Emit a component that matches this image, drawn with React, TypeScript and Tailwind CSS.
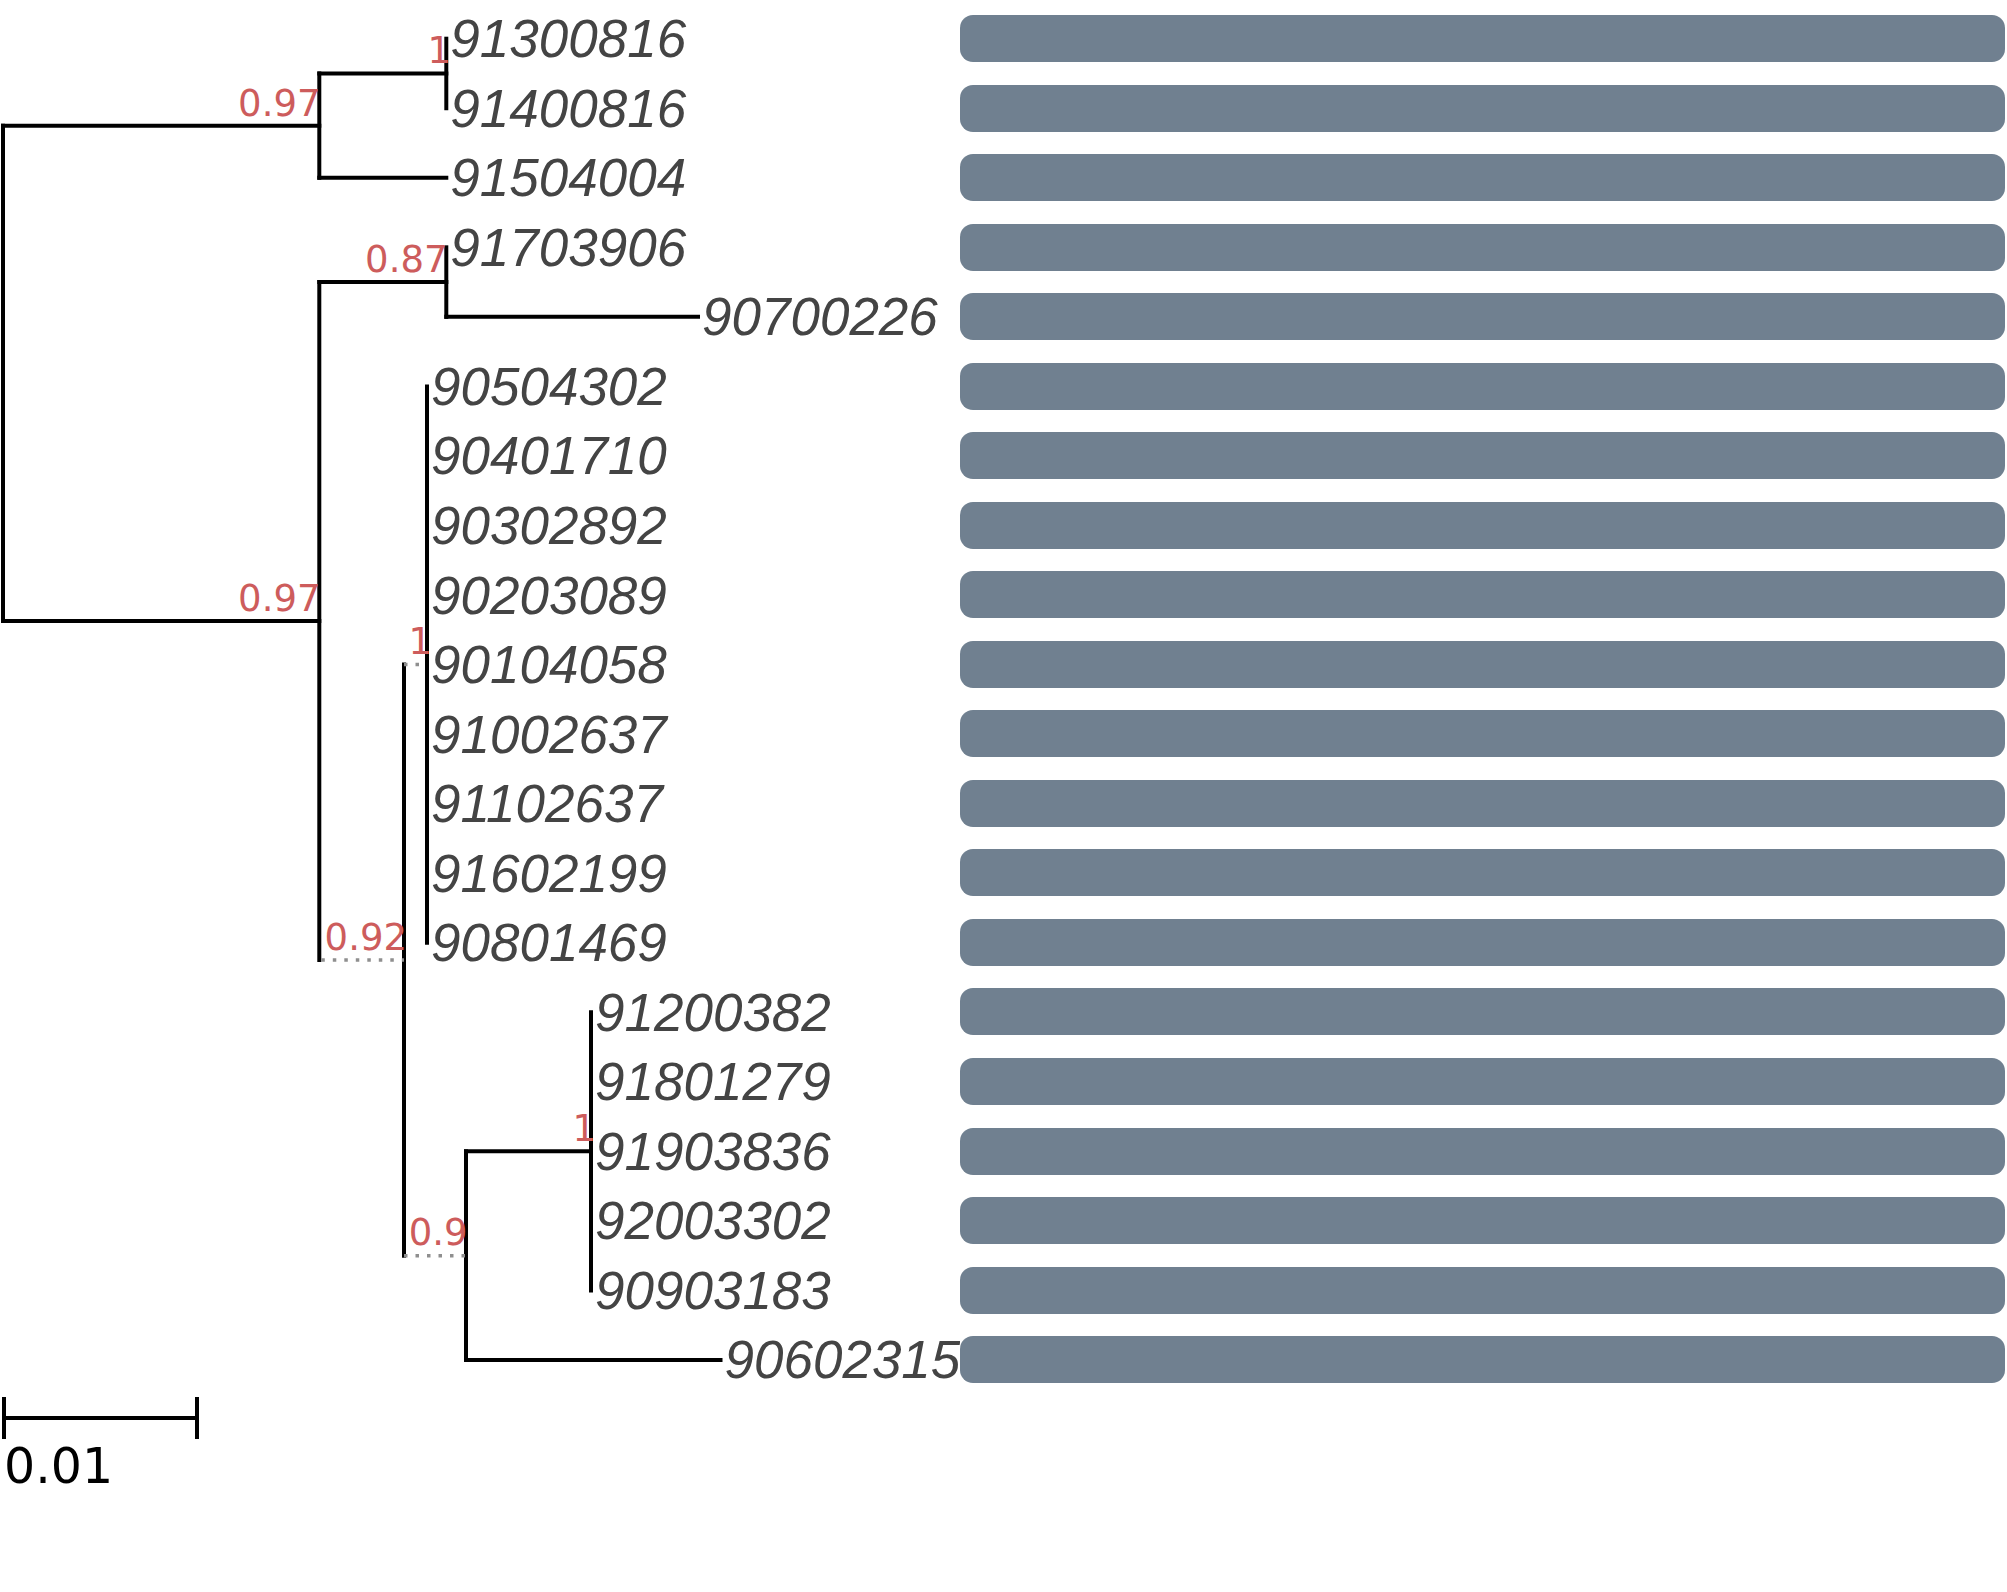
const ROW_TOP = 38.7;
const ROW_STEP = 69.54;
const rowY = (i: number) => ROW_TOP + ROW_STEP * i;

const LABEL_FONT = "'DejaVu Sans', 'Liberation Sans', sans-serif";
const LEAF_FONT = "'Liberation Sans', Arial, sans-serif";

// node positions (x = depth, y = midpoint of children)
const X_ROOT = 3;
const X_TOP = 319.3;
const X_CHERRY = 446.3;
const X_N092 = 404;
const X_P1 = 427;
const X_N09 = 466;
const X_P2 = 591;

const yC1 = (rowY(0) + rowY(1)) / 2;
const yA = (yC1 + rowY(2)) / 2;
const yN087 = (rowY(3) + rowY(4)) / 2;
const yP1 = (rowY(5) + rowY(13)) / 2;
const yP2 = (rowY(14) + rowY(18)) / 2;
const yN09 = (yP2 + rowY(19)) / 2;
const yN092 = (yP1 + yN09) / 2;
const yB = (yN087 + yN092) / 2;

const leaves = [
  { name: "91300816", x: X_CHERRY },
  { name: "91400816", x: X_CHERRY },
  { name: "91504004", x: X_CHERRY },
  { name: "91703906", x: X_CHERRY },
  { name: "90700226", x: 698 },
  { name: "90504302", x: X_P1 },
  { name: "90401710", x: X_P1 },
  { name: "90302892", x: X_P1 },
  { name: "90203089", x: X_P1 },
  { name: "90104058", x: X_P1 },
  { name: "91002637", x: X_P1 },
  { name: "91102637", x: X_P1 },
  { name: "91602199", x: X_P1 },
  { name: "90801469", x: X_P1 },
  { name: "91200382", x: X_P2 },
  { name: "91801279", x: X_P2 },
  { name: "91903836", x: X_P2 },
  { name: "92003302", x: X_P2 },
  { name: "90903183", x: X_P2 },
  { name: "90602315", x: 720.5 },
];

const solid = [
  `M${X_ROOT} ${yA}V${yB}`,
  `M${X_ROOT} ${yA}H${X_TOP}`,
  `M${X_ROOT} ${yB}H${X_TOP}`,
  `M${X_TOP} ${yC1}V${rowY(2)}`,
  `M${X_TOP} ${yC1}H${X_CHERRY}`,
  `M${X_CHERRY} ${rowY(0)}V${rowY(1)}`,
  `M${X_TOP} ${rowY(2)}H${X_CHERRY}`,
  `M${X_TOP} ${yN087}V${yN092}`,
  `M${X_TOP} ${yN087}H${X_CHERRY}`,
  `M${X_CHERRY} ${rowY(3)}V${rowY(4)}`,
  `M${X_CHERRY} ${rowY(4)}H698`,
  `M${X_N092} ${yP1}V${yN09}`,
  `M${X_P1} ${rowY(5)}V${rowY(13)}`,
  `M${X_N09} ${yP2}V${rowY(19)}`,
  `M${X_N09} ${yP2}H${X_P2}`,
  `M${X_P2} ${rowY(14)}V${rowY(18)}`,
  `M${X_N09} ${rowY(19)}H720.5`,
];

const dotted = [
  `M${X_TOP + 2} ${yN092}H${X_N092}`,
  `M${X_N092} ${yP1}H${X_P1}`,
  `M${X_N092} ${yN09}H${X_N09}`,
];

const support = [
  { text: "0.97", x: 320.5, y: yA - 10 },
  { text: "1", x: 451, y: yC1 - 10 },
  { text: "0.97", x: 320.5, y: yB - 10 },
  { text: "0.87", x: 447.5, y: yN087 - 10.5 },
  { text: "1", x: 432, y: yP1 - 10.5 },
  { text: "0.92", x: 407, y: yN092 - 10 },
  { text: "0.9", x: 467.5, y: yN09 - 10.5 },
  { text: "1", x: 596, y: yP2 - 10 },
];

function Tree() {
  return (
    <svg width={960} height={1592} className="shrink-0" viewBox="0 0 960 1592">
      {solid.map((d, i) => (
        <path key={i} d={d} stroke="#000" strokeWidth={4} strokeLinecap="square" fill="none" />
      ))}
      {dotted.map((d, i) => (
        <path key={i} d={d} stroke="#8f8f8f" strokeWidth={3.5} strokeDasharray="3.5 8" fill="none" />
      ))}
      {support.map((s, i) => (
        <text
          key={i}
          x={s.x}
          y={s.y}
          textAnchor="end"
          fontSize={37}
          fontFamily={LABEL_FONT}
          fill="#cd5c5c"
        >
          {s.text}
        </text>
      ))}
      {leaves.map((l, i) => (
        <text
          key={l.name}
          x={l.x + 4}
          y={rowY(i) + 18.5}
          fontSize={53}
          fontFamily={LEAF_FONT}
          fontStyle="italic"
          fill="#444444"
        >
          {l.name}
        </text>
      ))}
      {/* scale bar */}
      <path d="M4 1418H197M4 1397V1439M197 1397V1439" stroke="#000" strokeWidth={4} fill="none" />
      <text x={4} y={1483} fontSize={49} fontFamily={LABEL_FONT} fill="#000">
        0.01
      </text>
    </svg>
  );
}

export default function App() {
  return (
    <div className="flex h-[1592px] w-[2007px] overflow-hidden bg-white">
      <Tree />
      <div className="flex w-[1044.5px] flex-col gap-[22.54px] pt-[15px]">
        {leaves.map((l) => (
          <div key={l.name} className="h-[47px] shrink-0 rounded-[13px] bg-[#708090]" />
        ))}
      </div>
    </div>
  );
}
